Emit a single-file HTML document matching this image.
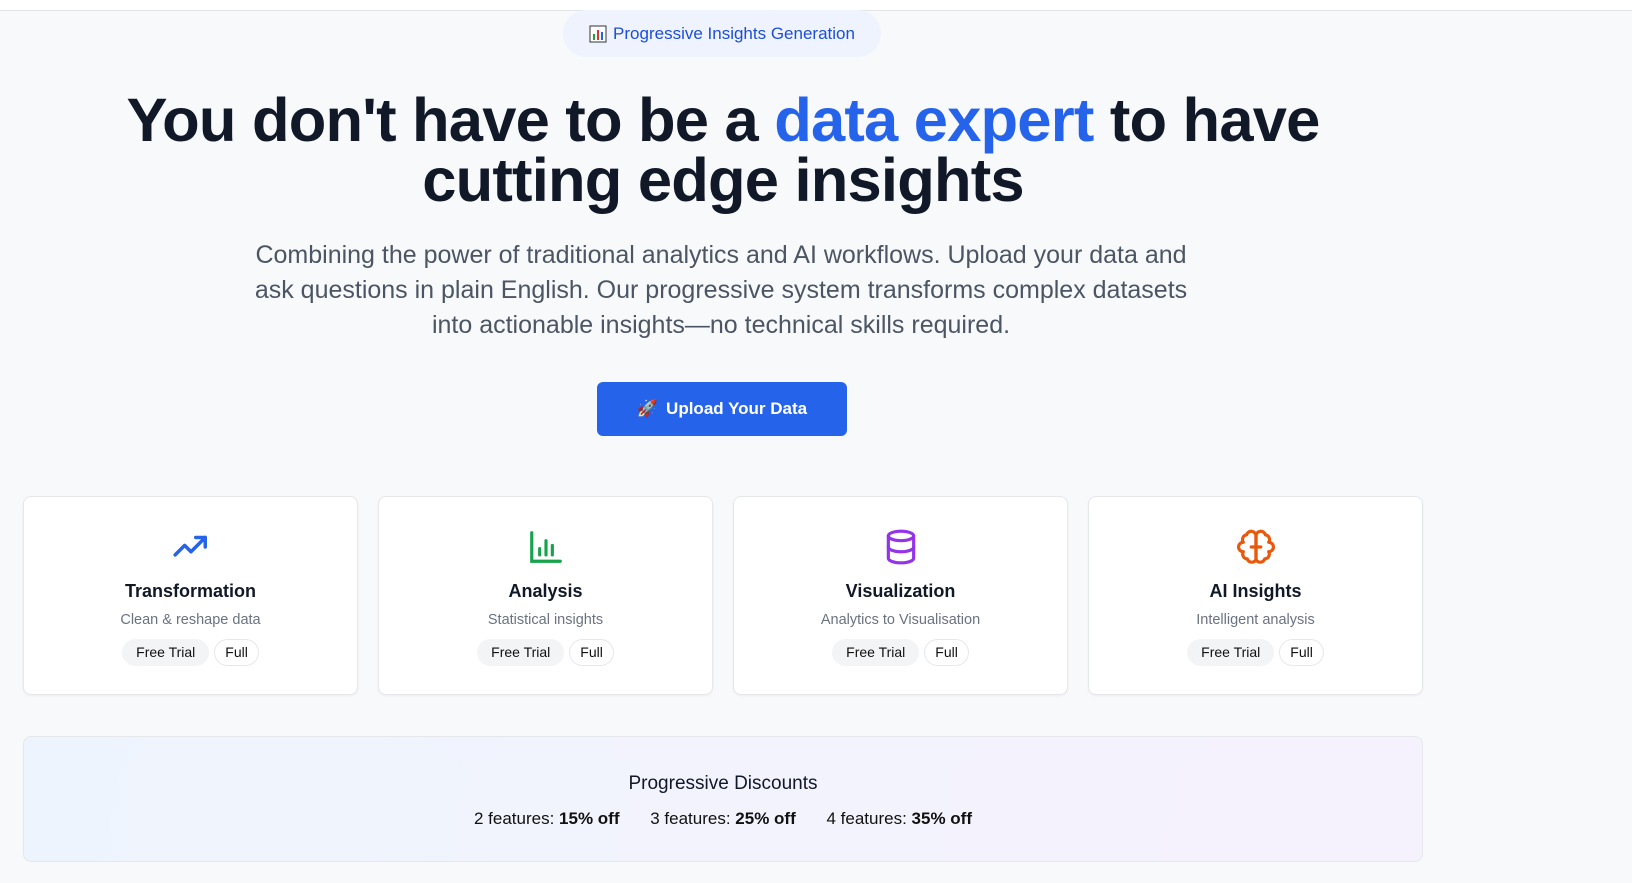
<!DOCTYPE html>
<html><head><meta charset="utf-8"><style>
*{box-sizing:border-box;margin:0;padding:0}
body{width:1632px;height:883px;background:#f8f9fb;font-family:"Liberation Sans",sans-serif;color:#111827;overflow:hidden;position:relative}
.top{position:absolute;left:0;top:0;width:1632px;height:11px;background:#fff;border-bottom:1px solid #e2e4e8}
.pill{position:absolute;left:563px;top:10px;width:318px;height:47px;border-radius:24px;background:#eef3fd;color:#1d4ed8;font-size:17px;display:flex;align-items:center;justify-content:center;gap:6px}
h1{position:absolute;left:0;width:1446px;top:91px;text-align:center;font-size:61.5px;line-height:60px;font-weight:700;letter-spacing:-0.8px;color:#111827}
h1 span{color:#2563eb}
p.lead{position:absolute;left:241px;width:960px;top:238px;text-align:center;font-size:25px;line-height:35px;color:#4b5563}
.btn{position:absolute;left:597px;top:382px;width:250px;height:54px;border-radius:6px;background:#2563eb;color:#fff;font-size:17px;font-weight:700;display:flex;align-items:center;justify-content:center;gap:8px}
.card{position:absolute;top:496px;width:335px;height:199px;background:#fff;border:1px solid #e5e7eb;border-radius:8px;box-shadow:0 1px 2px rgba(0,0,0,.05);text-align:center}
.card svg{position:absolute;left:148px;top:31px}
.card .t{position:absolute;left:0;right:0;top:84px;font-size:18px;font-weight:700}
.card .s{position:absolute;left:0;right:0;top:115px;font-size:14.5px;color:#6b7280}
.badges{position:absolute;left:0;right:0;top:142px;display:flex;justify-content:center;gap:5px}
.b{height:27px;line-height:25px;padding:0 13px;border-radius:14px;font-size:14px;border:1px solid #f3f4f6;background:#f3f4f6;color:#111}
.b.f{background:#fff;border-color:#e5e7eb;padding:0 10px}
.disc{position:absolute;left:23px;top:736px;width:1400px;height:126px;border:1px solid #e5e7eb;border-radius:8px;background:linear-gradient(100deg,#eef4fd,#f6f2fd);text-align:center}
.disc .h{margin-top:36px;font-size:19px;font-weight:500}
.disc .l{margin-top:14px;font-size:17px;color:#111}
.disc .l b{margin-right:26px}
</style></head><body>
<div class="top"></div>
<div class="pill"><svg width="18" height="18" viewBox="0 0 18 18"><rect x="1" y="1" width="16" height="16" fill="#fff" stroke="#333"/><rect x="4" y="9" width="2" height="6" fill="#2a9d3a"/><rect x="8" y="5" width="2" height="10" fill="#d33"/><rect x="12" y="7" width="2" height="8" fill="#2563eb"/></svg>Progressive Insights Generation</div>
<h1>You don't have to be a <span>data expert</span> to have<br>cutting edge insights</h1>
<p class="lead">Combining the power of traditional analytics and AI workflows. Upload your data and ask questions in plain English. Our progressive system transforms complex datasets into actionable insights—no technical skills required.</p>
<div class="btn"><span>🚀</span>Upload Your Data</div>

<div class="card" style="left:23px"><svg width="38" height="38" viewBox="0 0 24 24" fill="none" stroke="#2563eb" stroke-width="2.2" stroke-linecap="round" stroke-linejoin="round"><path d="M2 17l6-6 4 4 9-9"/><path d="M15 6h6v6"/></svg><div class="t">Transformation</div><div class="s">Clean &amp; reshape data</div><div class="badges"><span class="b">Free Trial</span><span class="b f">Full</span></div></div>
<div class="card" style="left:378px"><svg width="38" height="38" viewBox="0 0 24 24" fill="none" stroke="#16a34a" stroke-width="2" stroke-linecap="round"><path d="M3 3v18h18"/><path d="M8 17v-4M12 17V8M16 17v-6"/></svg><div class="t">Analysis</div><div class="s">Statistical insights</div><div class="badges"><span class="b">Free Trial</span><span class="b f">Full</span></div></div>
<div class="card" style="left:733px"><svg width="38" height="38" viewBox="0 0 24 24" fill="none" stroke="#9333ea" stroke-width="2" stroke-linecap="round"><ellipse cx="12" cy="5" rx="8" ry="3"/><path d="M4 5v14c0 1.7 3.6 3 8 3s8-1.3 8-3V5"/><path d="M4 12c0 1.7 3.6 3 8 3s8-1.3 8-3"/></svg><div class="t">Visualization</div><div class="s">Analytics to Visualisation</div><div class="badges"><span class="b">Free Trial</span><span class="b f">Full</span></div></div>
<div class="card" style="left:1088px"><svg width="38" height="38" viewBox="0 0 24 24" fill="none" stroke="#ea580c" stroke-width="2" stroke-linecap="round" stroke-linejoin="round"><path d="M12 5a3 3 0 0 0-5.9-.7A3 3 0 0 0 4 9a3 3 0 0 0 0 6 3 3 0 0 0 2.5 4.5A3 3 0 0 0 12 20z"/><path d="M12 5a3 3 0 0 1 5.9-.7A3 3 0 0 1 20 9a3 3 0 0 1 0 6 3 3 0 0 1-2.5 4.5A3 3 0 0 1 12 20z"/><path d="M12 5v15M9 12h6"/></svg><div class="t">AI Insights</div><div class="s">Intelligent analysis</div><div class="badges"><span class="b">Free Trial</span><span class="b f">Full</span></div></div>

<div class="disc"><div class="h">Progressive Discounts</div><div class="l">2 features: <b>15% off</b> 3 features: <b>25% off</b> 4 features: <b style="margin:0">35% off</b></div></div>
</body></html>
